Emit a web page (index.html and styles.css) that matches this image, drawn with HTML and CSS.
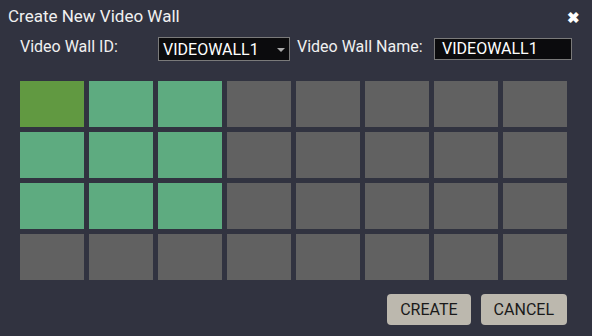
FILE: index.html
```html
<!DOCTYPE html>
<html lang="en">
<head>
    <meta charset="UTF-8">
    <meta name="viewport" content="width=device-width, initial-scale=1.0">
    <title>Create New Video Wall</title>
    <link rel="stylesheet" href="styles.css">
</head>
<body>
    <div class="dialog">
        <div class="dialog-header">
            <span class="dialog-title">Create New Video Wall</span>
            <span class="close-button">&#10006;</span>
        </div>

        <div class="form-row">
            <label class="id-label">Video Wall ID:</label>
            <div class="wall-select">
                <span>VIDEOWALL1</span>
                <span class="select-arrow"></span>
            </div>
            <label class="name-label">Video Wall Name:</label>
            <div class="name-input">VIDEOWALL1</div>
        </div>

        <div class="wall-grid">
            <div class="cell origin"></div>
            <div class="cell picked"></div>
            <div class="cell picked"></div>
            <div class="cell"></div>
            <div class="cell"></div>
            <div class="cell"></div>
            <div class="cell"></div>
            <div class="cell"></div>

            <div class="cell picked"></div>
            <div class="cell picked"></div>
            <div class="cell picked"></div>
            <div class="cell"></div>
            <div class="cell"></div>
            <div class="cell"></div>
            <div class="cell"></div>
            <div class="cell"></div>

            <div class="cell picked"></div>
            <div class="cell picked"></div>
            <div class="cell picked"></div>
            <div class="cell"></div>
            <div class="cell"></div>
            <div class="cell"></div>
            <div class="cell"></div>
            <div class="cell"></div>

            <div class="cell"></div>
            <div class="cell"></div>
            <div class="cell"></div>
            <div class="cell"></div>
            <div class="cell"></div>
            <div class="cell"></div>
            <div class="cell"></div>
            <div class="cell"></div>
        </div>

        <div class="button-row">
            <button class="dialog-button">CREATE</button>
            <button class="dialog-button">CANCEL</button>
        </div>
    </div>
</body>
</html>
```

FILE: styles.css
```css
body {
    margin: 0;
    background-color: #313340;
    font-family: Roboto, "Liberation Sans", sans-serif;
    color: #f0f0f0;
}
.dialog {
    width: 592px;
    height: 336px;
    box-sizing: border-box;
    padding: 0 20px 0 20px;
}
.dialog-header {
    display: flex;
    justify-content: space-between;
    align-items: center;
    height: 33px;
    margin-left: -12px;
}
.dialog-title {
    font-size: 17px;
    padding-bottom: 1px;
}
.close-button {
    font-size: 15px;
    font-weight: bold;
    color: #fff;
    margin-right: -8px;
    margin-top: 2px;
}
.form-row {
    display: flex;
    align-items: flex-start;
    height: 48px;
    font-size: 16px;
}
.form-row > * {
    flex-shrink: 0;
    box-sizing: border-box;
}
.id-label {
    width: 138px;
    padding-top: 4px;
}
.wall-select {
    width: 132px;
    height: 24px;
    border: 1px solid #7a7a7a;
    background-color: #0b0b0d;
    color: #fff;
    display: flex;
    align-items: center;
    justify-content: space-between;
    padding-left: 4px;
    margin-top: 4px;
}
.select-arrow {
    width: 0;
    height: 0;
    border-left: 4px solid transparent;
    border-right: 4px solid transparent;
    border-top: 4px solid #aaa;
    margin-right: 4px;
    margin-top: 2px;
}
.name-label {
    width: 144px;
    padding-left: 7px;
    padding-top: 4px;
}
.name-input {
    width: 138px;
    height: 22px;
    line-height: 20px;
    border: 1px solid #7a7a7a;
    background-color: #0b0b0d;
    color: #fff;
    padding-left: 7px;
    margin-top: 5px;
}
.wall-grid {
    display: grid;
    grid-template-columns: repeat(8, 64px);
    grid-auto-rows: 46px;
    gap: 5px;
}
.cell {
    background-color: #616161;
}
.cell.picked {
    background-color: #5eab80;
}
.cell.origin {
    background-color: #619941;
}
.button-row {
    display: flex;
    justify-content: flex-end;
    gap: 10px;
    margin-top: 14px;
    padding-right: 5px;
}
.dialog-button {
    height: 31px;
    padding: 0 13px;
    font-family: Roboto, "Liberation Sans", sans-serif;
    font-size: 16px;
    color: #1a1a1a;
    background-color: #bcb8ae;
    border: none;
    border-radius: 4px;
}
```
